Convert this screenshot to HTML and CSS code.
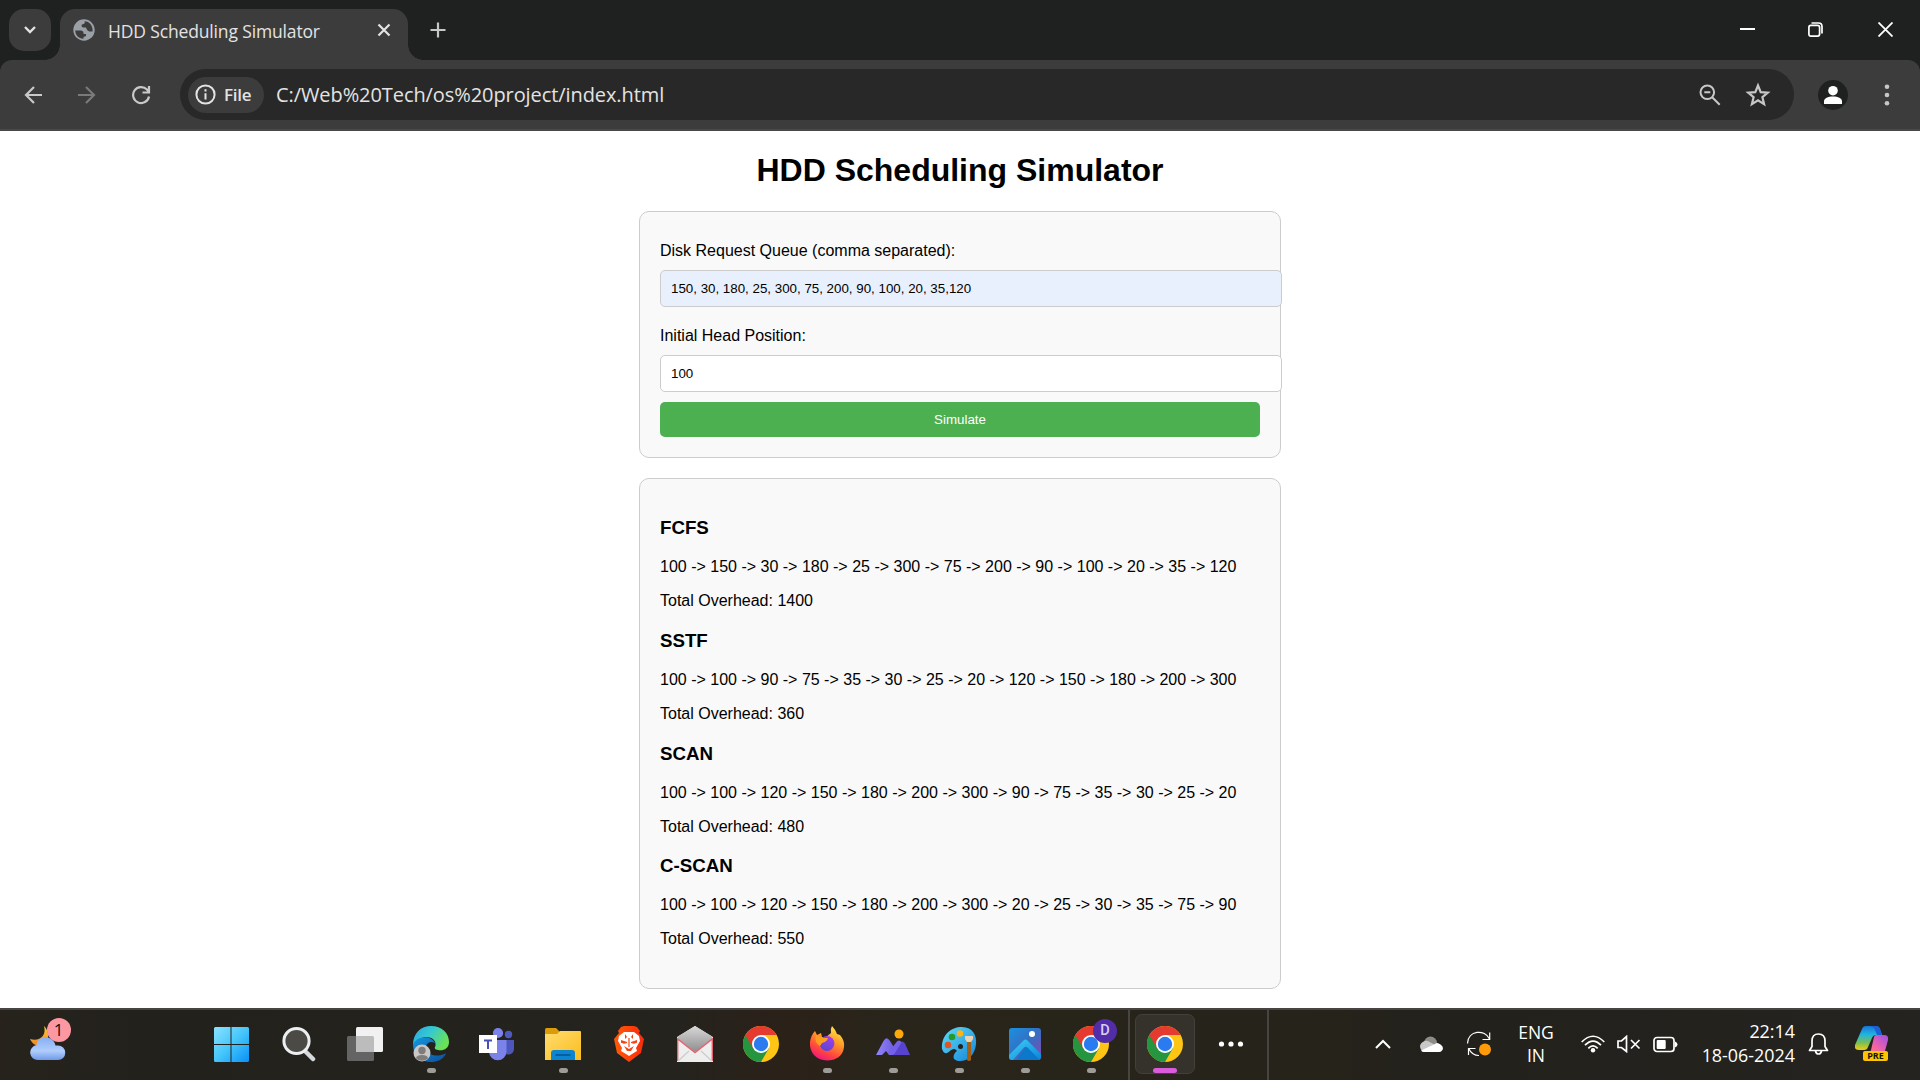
FILE: index.html
```html
<!DOCTYPE html>
<html lang="en">
<head>
<meta charset="utf-8">
<title>HDD Scheduling Simulator</title>
<link rel="stylesheet" href="styles.css">
</head>
<body>
<svg class="defs" width="0" height="0" aria-hidden="true">
  <defs>
    <linearGradient id="win" x1="0" y1="0" x2="1" y2="1"><stop offset="0" stop-color="#8be2ff"/><stop offset=".5" stop-color="#45c6fb"/><stop offset="1" stop-color="#0a90f5"/></linearGradient>
    <linearGradient id="moon" x1="0" y1="0" x2="0" y2="1"><stop offset="0" stop-color="#ffc93c"/><stop offset="1" stop-color="#ee8420"/></linearGradient>
    <linearGradient id="cloud" x1="0" y1="0" x2="0" y2="1"><stop offset="0" stop-color="#86aef5"/><stop offset=".6" stop-color="#b0cdfb"/><stop offset="1" stop-color="#7099ea"/></linearGradient>
    <linearGradient id="edgeTop" x1="0" y1="0" x2="1" y2=".5"><stop offset="0" stop-color="#2aa5e0"/><stop offset=".5" stop-color="#36c9d0"/><stop offset="1" stop-color="#6ae255"/></linearGradient>
    <linearGradient id="edgeBody" x1="0" y1="0" x2="1" y2="1"><stop offset="0" stop-color="#1497dd"/><stop offset="1" stop-color="#0c4f9f"/></linearGradient>
    <linearGradient id="folder" x1="0" y1="0" x2="1" y2="1"><stop offset="0" stop-color="#ffdc70"/><stop offset="1" stop-color="#fbbd1b"/></linearGradient>
    <linearGradient id="brave" x1="0" y1="0" x2="1" y2="0"><stop offset="0" stop-color="#ff5a0a"/><stop offset="1" stop-color="#fb2a0c"/></linearGradient>
    <linearGradient id="fox" x1=".8" y1="0" x2=".3" y2="1"><stop offset="0" stop-color="#fff04a"/><stop offset=".4" stop-color="#ff9a26"/><stop offset=".75" stop-color="#ff4340"/><stop offset="1" stop-color="#ec1582"/></linearGradient>
    <linearGradient id="foxGlobe" x1=".7" y1="0" x2=".3" y2="1"><stop offset="0" stop-color="#a63cf2"/><stop offset="1" stop-color="#5648cf"/></linearGradient>
    <linearGradient id="mountain" x1="0" y1="0" x2="1" y2="0"><stop offset="0" stop-color="#9286f6"/><stop offset="1" stop-color="#6a55e0"/></linearGradient>
    <linearGradient id="paint" x1="0" y1="0" x2="1" y2="1"><stop offset="0" stop-color="#5fdcfa"/><stop offset="1" stop-color="#1585d8"/></linearGradient>
    <linearGradient id="photo" x1="0" y1="0" x2="1" y2="1"><stop offset="0" stop-color="#1a91e0"/><stop offset=".5" stop-color="#346fc3"/><stop offset="1" stop-color="#8b47ae"/></linearGradient>
    <linearGradient id="hill" x1="0" y1="0" x2="1" y2="1"><stop offset="0" stop-color="#3fd0f5"/><stop offset="1" stop-color="#0c85dc"/></linearGradient>
    <linearGradient id="coA" x1="0" y1="0" x2="0" y2="1"><stop offset="0" stop-color="#1676d8"/><stop offset=".35" stop-color="#20b3e0"/><stop offset=".7" stop-color="#79bf55"/><stop offset="1" stop-color="#f2cc12"/></linearGradient>
    <linearGradient id="coB" x1="1" y1="0" x2="0" y2="1"><stop offset="0" stop-color="#9a51e8"/><stop offset=".55" stop-color="#f062a8"/><stop offset="1" stop-color="#ff8a53"/></linearGradient>
    <linearGradient id="mailTop" x1="0" y1="0" x2="0" y2="1"><stop offset="0" stop-color="#d8d8d8"/><stop offset="1" stop-color="#8e8e8e"/></linearGradient>
    <symbol id="chrome" viewBox="0 0 36 36">
      <circle cx="18" cy="18" r="18" fill="#ffc514"/>
      <path d="M18 18L2.4 9A18 18 0 0 0 18 36L25.8 22.5Z" fill="#26953f"/>
      <path d="M18 9H33.6A18 18 0 0 0 2.4 9L10.2 22.5 18 18Z" fill="#e43a30"/>
      <circle cx="18" cy="18" r="9" fill="#fff"/><circle cx="18" cy="18" r="7.2" fill="#2a7af0"/>
    </symbol>
  </defs>
</svg>

<header class="browser">
  <div class="tabstrip">
    <button class="tab-search" aria-label="Search tabs"><svg width="14" height="10" viewBox="0 0 14 10"><path d="M2 2l5 5 5-5" fill="none" stroke="#e3e3e3" stroke-width="2.4"/></svg></button>
    <div class="tab">
      <svg class="globe" width="22" height="22" viewBox="0 0 22 22"><circle cx="11" cy="11" r="10.7" fill="#9aa0a6"/><path d="M2.300 11.500H7.500q3 0 3 2.500v1h2.500v2l-2.500 1v1.700C5.500 19.700 2.300 16 2.300 11.500ZM11.500 2.300Q12.500 4.500 10.500 5q-2 .3-2 1.800 0 1.700 2 1.700h2.500q1 3.500 3.500 4H19.600C20 7 16.500 2.300 11.500 2.300Z" fill="#3c3c3c"/></svg>
      <span class="tab-title">HDD Scheduling Simulator</span>
      <svg class="tab-close" width="14" height="14" viewBox="0 0 14 14"><path d="M1.500 1.500l11 11M12.500 1.500l-11 11" stroke="#e3e3e3" stroke-width="2.200"/></svg>
    </div>
    <svg class="new-tab" width="18" height="18" viewBox="0 0 18 18"><path d="M9 1.500v15M1.500 9h15" stroke="#c7c7c7" stroke-width="2.200"/></svg>
    <div class="window-controls">
      <svg width="15" height="15" viewBox="0 0 15 15"><path d="M0 7h15" stroke="#fff" stroke-width="2"/></svg>
      <svg width="15" height="15" viewBox="0 0 15 15"><rect x=".9" y="3.400" width="10.700" height="10.700" rx="2" fill="none" stroke="#fff" stroke-width="1.700"/><path d="M3.500 1H10.500Q14 1 14 4.500V11.500" fill="none" stroke="#fff" stroke-width="1.700"/></svg>
      <svg width="15" height="15" viewBox="0 0 15 15"><path d="M.5.5l14 14M14.500.5l-14 14" stroke="#fff" stroke-width="1.800"/></svg>
    </div>
  </div>
  <div class="toolbar">
    <nav class="nav">
      <svg width="20" height="20" viewBox="0 0 20 20"><path d="M19 10H3M11 2L3 10l8 8" fill="none" stroke="#c9c9c9" stroke-width="2.200"/></svg>
      <svg width="20" height="20" viewBox="0 0 20 20"><path d="M1 10h16M9 2l8 8-8 8" fill="none" stroke="#7a7a7a" stroke-width="2.200"/></svg>
      <svg width="20" height="20" viewBox="0 0 20 20"><path d="M18 11.500A8 8 0 1 1 16 4.600L17.500 6.500M18 1v6.500h-6.500" fill="none" stroke="#c9c9c9" stroke-width="2.200"/></svg>
    </nav>
    <div class="omnibox">
      <div class="chip">
        <svg width="21" height="21" viewBox="0 0 21 21"><circle cx="10.500" cy="10.500" r="9.100" fill="none" stroke="#e3e3e3" stroke-width="2"/><path d="M10.500 9.300v6.200M10.500 5.300v2.200" stroke="#e3e3e3" stroke-width="2"/></svg>
        <span class="chip-label">File</span>
      </div>
      <span class="url">C:/Web%20Tech/os%20project/index.html</span>
      <svg class="zoom-icon" width="22" height="22" viewBox="0 0 22 22"><circle cx="8.300" cy="8.300" r="6.800" fill="none" stroke="#c7c7c7" stroke-width="2"/><path d="M13.200 13.200l7.500 7.500M5.300 8.300h6" stroke="#c7c7c7" stroke-width="2"/></svg>
      <svg class="star-icon" width="26" height="26" viewBox="0 0 26 26"><path d="M13 3.500l2.700 6.600 7.100.5-5.400 4.600 1.700 7L13 18.400l-6.100 3.800 1.700-7-5.400-4.600 7.100-.5Z" fill="none" stroke="#c7c7c7" stroke-width="2.200"/></svg>
    </div>
    <svg class="avatar" width="30" height="30" viewBox="0 0 30 30"><circle cx="15" cy="15" r="15" fill="#1f2020"/><circle cx="15" cy="10.700" r="4.800" fill="#fff"/><path d="M6 24v-2.500c0-3.500 4-5 9-5s9 1.500 9 5V24Z" fill="#fff"/></svg>
    <svg class="menu-dots" width="6" height="22" viewBox="0 0 6 22"><g fill="#c7c7c7"><circle cx="3" cy="2.800" r="2.300"/><circle cx="3" cy="11" r="2.300"/><circle cx="3" cy="19.200" r="2.300"/></g></svg>
  </div>
</header>

<main class="page">
  <h1>HDD Scheduling Simulator</h1>
  <form class="card form">
    <label for="queue">Disk Request Queue (comma separated):</label>
    <input class="autofilled" id="queue" type="text" value="150, 30, 180, 25, 300, 75, 200, 90, 100, 20, 35,120">
    <label for="head">Initial Head Position:</label>
    <input id="head" type="text" value="100">
    <button class="simulate" type="button">Simulate</button>
  </form>
  <section class="card results">
    <article class="result">
      <h3>FCFS</h3>
      <p>100 -&gt; 150 -&gt; 30 -&gt; 180 -&gt; 25 -&gt; 300 -&gt; 75 -&gt; 200 -&gt; 90 -&gt; 100 -&gt; 20 -&gt; 35 -&gt; 120</p>
      <p>Total Overhead: 1400</p>
    </article>
    <article class="result">
      <h3>SSTF</h3>
      <p>100 -&gt; 100 -&gt; 90 -&gt; 75 -&gt; 35 -&gt; 30 -&gt; 25 -&gt; 20 -&gt; 120 -&gt; 150 -&gt; 180 -&gt; 200 -&gt; 300</p>
      <p>Total Overhead: 360</p>
    </article>
    <article class="result">
      <h3>SCAN</h3>
      <p>100 -&gt; 100 -&gt; 120 -&gt; 150 -&gt; 180 -&gt; 200 -&gt; 300 -&gt; 90 -&gt; 75 -&gt; 35 -&gt; 30 -&gt; 25 -&gt; 20</p>
      <p>Total Overhead: 480</p>
    </article>
    <article class="result">
      <h3>C-SCAN</h3>
      <p>100 -&gt; 100 -&gt; 120 -&gt; 150 -&gt; 180 -&gt; 200 -&gt; 300 -&gt; 20 -&gt; 25 -&gt; 30 -&gt; 35 -&gt; 75 -&gt; 90</p>
      <p>Total Overhead: 550</p>
    </article>
  </section>
</main>

<footer class="taskbar">
  <div class="widgets">
    <svg width="36" height="36" viewBox="0 0 36 36"><path d="M14 1C21 8 19 19 9 21 5 21 2 18 0 14 9 17 17 11 14 1Z" fill="url(#moon)"/><path d="M8 35a7.500 7.500 0 0 1-1.500-14.900C7 10 23 9 25.500 20.500H28a7.200 7.200 0 0 1 0 14.500Z" fill="url(#cloud)"/></svg>
    <span class="count">1</span>
  </div>
  <div class="apps">
    <div class="app start"><svg width="36" height="36" viewBox="0 0 36 36"><path d="M2.500 1H17.500v17H1V2.500Q1 1 2.500 1ZM18.500 1H34.500Q36 1 36 2.500V18H18.500ZM1 19H17.500V36H2.500Q1 36 1 34.500ZM18.500 19H36V34.500Q36 36 34.500 36H18.500Z" fill="url(#win)"/></svg></div>
    <div class="app"><svg width="36" height="36" viewBox="0 0 36 36"><path d="M24 25l8 8" stroke="#d5d9dd" stroke-width="4.500" stroke-linecap="round"/><circle cx="15.500" cy="15" r="12.600" fill="#4c4a45" stroke="#eceff1" stroke-width="3"/></svg></div>
    <div class="app"><svg width="36" height="36" viewBox="0 0 36 36"><rect x="0" y="10" width="27" height="25" rx="1.500" fill="#646465"/><rect x="9" y="1" width="27" height="25" rx="1.500" fill="#f1f1f1"/><path d="M9 10H25.500Q27 10 27 11.500V26H10.500Q9 26 9 24.500Z" fill="#bcbcbc"/></svg></div>
    <div class="app open"><svg width="36" height="36" viewBox="0 0 36 36"><path d="M0 19C0 7 8 0 18 0c11 0 18 7 18 16 0 7-6 9-11 8-3-.500-4-1.500-2.500-4C24 11 10 6 0 19Z" fill="url(#edgeTop)"/><path d="M0 19C2 10 18 8 22 17 12 12 8 28 22 29.500c6 .5 10-2 11-2C30 34 24 36 18 36 7 36 0 28 0 19Z" fill="url(#edgeBody)"/><circle cx="9" cy="27" r="8.500" fill="#c9c8c6"/><circle cx="9" cy="24.500" r="3.700" fill="#807c79"/><path d="M3 32.500q0-3.500 6-3.500t6 3.500q-6 4.500-12 0Z" fill="#807c79"/></svg></div>
    <div class="app"><svg width="36" height="36" viewBox="0 0 36 36"><circle cx="29.500" cy="8.500" r="3.700" fill="#4e59c2"/><path d="M25 14H35V22.500c0 5-4 7-8.500 5.500Z" fill="#4c56bb"/><circle cx="19" cy="7" r="5.100" fill="#7b83eb"/><path d="M10 14H27.500V25.500a8.600 8.600 0 0 1-17.500 0Z" fill="#7b83eb"/><rect x="0" y="9" width="18" height="18" fill="#fff"/><path d="M5 13.500h8v2h-3V23H8v-7.500H5Z" fill="#4650b5"/></svg></div>
    <div class="app open"><svg width="36" height="36" viewBox="0 0 36 36"><path d="M0 3.500Q0 2 1.500 2H11l4 4V10H0Z" fill="#dc9c07"/><path d="M0 8h12l3-3H35q1 0 1 1V34H0Z" fill="url(#folder)"/><path d="M6 34V27Q6 24 9 24H27Q30 24 30 27V34Z" fill="#0d84cf"/><path d="M10.500 29h15" stroke="#075a98" stroke-width="1.800"/></svg></div>
    <div class="app"><svg width="36" height="36" viewBox="0 0 36 36"><path d="M10 1 13 0H23l3 1 3 4-1 2 5 6-3 14-12 9-12-9-3-14 5-6-1-2Z" fill="url(#brave)"/><path d="M8 10l5-4h10l5 4 1 5-4 7 1 3-5 3-3 2-3-2-5-3 1-3-4-7Z" fill="#fff"/><path d="M10 14l6 2v1l-3 .8-3-1ZM26 14l-6 2v1l3 .8 3-1ZM14 8l2 3-2 2M22 8l-2 3 2 2M13 20l5 3 5-3-3 5h-4Z" fill="#fb4212"/><path d="M18 12v9" stroke="#fb4212" stroke-width="1.200"/></svg></div>
    <div class="app"><svg width="36" height="36" viewBox="0 0 36 36"><path d="M0 11 18 0 36 11V36H0Z" fill="#eee"/><path d="M1 10.500 18 0l17 10.500V13L18 26 1 13Z" fill="url(#mailTop)"/><path d="M.7 35V13l17.300 13.500L35.300 13V35" fill="none" stroke="#e26370" stroke-width="1.400"/><path d="M1 35l11-10M35 35L24 25" stroke="#ccc" stroke-width="1.200"/></svg></div>
    <div class="app"><svg width="36" height="36"><use href="#chrome"/></svg></div>
    <div class="app open"><svg width="36" height="36" viewBox="0 0 36 36"><path d="M1 16Q2 9 6 5l2 4 4-2 1 4h4l5-4Q21 3 23 0q3 3 5 8l3 1q5 6 4 12C34 30 27 34.500 18 34.500 7 34.500 0 26 1 16Z" fill="url(#fox)"/><circle cx="18" cy="17.500" r="7.400" fill="url(#foxGlobe)"/><path d="M7 9l7 3h5q-1 4-6 5l-2 3q-6-3-4-11Z" fill="#ff9d20"/></svg></div>
    <div class="app open"><svg width="36" height="36" viewBox="0 0 36 36"><circle cx="24" cy="8" r="4.500" fill="#ffa90a"/><path d="M1 29 8.500 15q3-5.500 6.500 0l7 11-3 3h-5l-3-4-4 4Z" fill="url(#mountain)"/><path d="M17 29 24 17.500q3-4 6 0L35 29Z" fill="#5743cd"/><path d="M13 27l8.500-11q3-3 5 .5L20 27q-3 4-7 0Z" fill="#7361ec"/></svg></div>
    <div class="app open"><svg width="36" height="36" viewBox="0 0 36 36"><path d="M1 23C0 9 10 1 21 1c11 0 15 9 14 17-1 11-8 17-16 17-9 0-7-7-3-10-5-6-8 4-12 2Q2 26 1 23Z" fill="url(#paint)"/><circle cx="19" cy="7.500" r="3.300" fill="#ffb30c"/><circle cx="11" cy="11" r="3.300" fill="#259a2b"/><circle cx="7" cy="19" r="3.300" fill="#e2531f"/><circle cx="19.500" cy="20.500" r="2.500" fill="#24221c"/><path d="M26 15h4V34q-2 2-4 0Z" fill="#a45e12"/><path d="M24 10h8v3l-2 3h-4l-2-3Z" fill="#ead3b5"/></svg></div>
    <div class="app open"><svg width="36" height="36" viewBox="0 0 36 36"><rect x="2" y="2" width="32" height="32" rx="3" fill="url(#photo)"/><path d="M9 34 18 22q2-2 4 0L33 33q-1 1-2 1Z" fill="#0b78cc"/><path d="M2 29 16.500 14.500q2-2 4 0L34 28V31q0 2-1.500 2.600L20.500 21.500Q18.500 20 16.500 22L6 34H5q-3 0-3-3Z" fill="url(#hill)"/><circle cx="25" cy="8" r="3" fill="#fff"/></svg></div>
    <div class="app open"><svg width="36" height="36"><use href="#chrome"/></svg><span class="profile">D</span></div>
  </div>
  <div class="recent">
    <div class="active-app"><svg width="36" height="36"><use href="#chrome"/></svg></div>
    <svg class="more" width="26" height="8" viewBox="0 0 26 8"><g fill="#fff"><circle cx="3.500" cy="4" r="2.600"/><circle cx="13" cy="4" r="2.600"/><circle cx="22.500" cy="4" r="2.600"/></g></svg>
  </div>
  <div class="tray">
    <svg class="caret" width="16" height="11" viewBox="0 0 16 11"><path d="M1 9l7-7 7 7" fill="none" stroke="#fff" stroke-width="2"/></svg>
    <svg class="onedrive" width="24" height="17" viewBox="0 0 24 17"><circle cx="11.500" cy="7" r="6.500" fill="#8d8c8a"/><path d="M4 15A5 5 0 0 1 3 6.500Q7 3 11.500 6.500l8 4-7 4.500Z" fill="#c8c8c8"/><path d="M2 14.500 15 8.500q3-3 6.500 0 4 3 1.500 6-1 1.500-3 1.500H5q-2 0-3-1.500Z" fill="#fff"/></svg>
    <svg class="sync" width="26" height="26" viewBox="0 0 26 26"><path d="M1.500 12.500C2-1 19-2 23.500 8M23.700 1.500V8.500H16.500M2.500 24V17.500H9.500M3 18Q6 24.500 13 24.500" fill="none" stroke="#fff" stroke-width="1.200"/><circle cx="19" cy="18.500" r="6" fill="#ff9b0b"/></svg>
    <div class="lang"><span>ENG</span><span>IN</span></div>
    <svg class="wifi" width="24" height="18" viewBox="0 0 24 18"><g fill="none" stroke="#fff" stroke-width="1.700"><path d="M.7 7Q12-4.500 23.300 7"/><path d="M4 10.200Q12 2 20 10.200"/><path d="M7.300 13.300Q12 8.500 16.700 13.300"/></g><circle cx="12" cy="15.300" r="2.200" fill="#fff"/></svg>
    <svg class="volume" width="24" height="18" viewBox="0 0 24 18"><path d="M1 6h3.500L9.500 1.500V16.500L4.500 12.500H1ZM14 5l8.500 8.500M22.500 5l-8.500 8.500" fill="none" stroke="#fff" stroke-width="1.700"/></svg>
    <svg class="battery" width="25" height="17" viewBox="0 0 25 17"><rect x="1" y="1.500" width="20" height="14" rx="3" fill="none" stroke="#fff" stroke-width="1.700"/><rect x="3.700" y="4" width="9" height="9" rx="1" fill="#fff"/><path d="M22 5.500q2.500 1 2.500 3t-2.500 3Z" fill="#fff"/></svg>
    <div class="clock"><span>22:14</span><span>18-06-2024</span></div>
    <svg class="bell" width="21" height="22" viewBox="0 0 21 22"><path d="M1.500 17.500 4 13.500V8q0-7 6.500-7T17 8v5.500l2.500 4ZM7.500 18q.500 3 3 3t3-3" fill="none" stroke="#fff" stroke-width="1.700" stroke-linejoin="round"/></svg>
    <div class="copilot"><svg width="36" height="36" viewBox="0 0 36 36"><path d="M7 3q1-3 4-3h10q3 0 4 3l2 6h-6q-3 0-4 3l-4 9q-1 3-4 3H4q-5 0-4-5Z" fill="url(#coA)"/><path d="M11 0h10q3 0 4 3l2 6h-5l-2-5q-1-3-5-4Z" fill="#1c60d8"/><path d="M21 9h8q5 0 4 5l-3 11q-1 4-5 4H11q4-1 5-5l3-13q.500-2 2-2Z" fill="url(#coB)"/></svg><span class="pre">PRE</span></div>
  </div>
</footer>
</body>
</html>
```
FILE: styles.css
```css
* { box-sizing: border-box; }

body {
  margin: 0;
  width: 1920px;
  height: 1080px;
  overflow: hidden;
  display: flex;
  flex-direction: column;
  background: #fff;
  color: #000;
  font-family: "Liberation Sans", Arial, sans-serif;
}

svg { display: block; flex: none; }
.defs { position: absolute; }

/* Browser window */
.browser {
  height: 131px;
  flex: none;
  background: #1f2020;
  color: #e3e3e3;
  font-family: "Open Sans", "Noto Sans", sans-serif;
}
.tabstrip { height: 60px; display: flex; align-items: flex-start; padding: 9px 27px 0 9px; }
.tab-search {
  width: 42px;
  height: 42px;
  padding: 0;
  border: 0;
  border-radius: 15px;
  background: #3c3c3c;
  display: grid;
  place-items: center;
}
.tab {
  position: relative;
  width: 348px;
  height: 51px;
  margin-left: 9px;
  padding: 0 17px 9px 13px;
  border-radius: 15px 15px 0 0;
  background: #3c3c3c;
  display: flex;
  align-items: center;
}
.tab::before, .tab::after {
  content: "";
  position: absolute;
  bottom: 0;
  width: 15px;
  height: 15px;
}
.tab::before { left: -15px; background: radial-gradient(circle at 0 0, transparent 14.5px, #3c3c3c 15px); }
.tab::after { right: -15px; background: radial-gradient(circle at 100% 0, transparent 14.5px, #3c3c3c 15px); }
.tab-title { margin-left: 13px; flex: 1; font-size: 17.5px; line-height: 24px; padding-top: 1px; white-space: nowrap; letter-spacing: -0.15px; }
.new-tab { margin: 12px 0 0 21px; }
.window-controls { margin-left: auto; display: flex; gap: 54px; padding-top: 13px; }
.window-controls svg:nth-child(2) { margin: 0 1px 0 -1px; }

.toolbar {
  height: 71px;
  padding: 9px 30px 9px 23px;
  border-bottom: 2px solid #484848;
  border-radius: 12px 12px 0 0;
  background: #3c3c3c;
  display: flex;
  align-items: center;
}
.nav { display: flex; gap: 34px; width: 157px; }
.omnibox {
  width: 1614px;
  height: 51px;
  padding: 0 23px 0 8px;
  border-radius: 26px;
  background: #282828;
  display: flex;
  align-items: center;
}
.chip {
  width: 76px;
  height: 36px;
  padding-left: 7px;
  border-radius: 18px;
  background: #3c3c3c;
  display: flex;
  align-items: center;
  gap: 8px;
}
.chip-label { font-size: 17px; font-weight: 600; letter-spacing: -0.3px; }
.url { margin-left: 12px; flex: 1; font-size: 20px; line-height: 28px; letter-spacing: -0.08px; }
.zoom-icon { margin-right: 24px; }
.avatar { margin-left: 24px; }
.menu-dots { margin-left: auto; }

/* Simulator page */
.page { height: 877px; flex: none; overflow: hidden; }
.page h1 { margin: 21px 0 22px; font-size: 32px; line-height: 37px; text-align: center; }
.card {
  width: 642px;
  margin: 0 auto;
  padding: 20px;
  border: 1px solid #ccc;
  border-radius: 10px;
  background: #f9f9f9;
}
.form { height: 247px; }
.form label { display: block; margin: 10px 0; font-size: 16px; line-height: 18px; }
.form input {
  display: block;
  width: 622px;
  height: 37px;
  margin: 0 0 20px;
  padding: 10px;
  border: 1px solid #ccc;
  border-radius: 5px;
  background: #fff;
  color: #000;
  font: 13.333px "Liberation Sans", Arial, sans-serif;
}
.form input.autofilled { background: #e8f0fe; }
.form #head { margin-bottom: 10px; }
.simulate {
  display: block;
  width: 600px;
  height: 35px;
  padding: 0;
  border: 0;
  border-radius: 5px;
  background: #4caf50;
  color: #fff;
  font: 13.333px "Liberation Sans", Arial, sans-serif;
}
.results { height: 511px; margin-top: 20px; padding-top: 18px; }
.result { display: flow-root; height: 112.8px; }
.result h3 { margin: 20px 0 19px; font-size: 18.72px; line-height: 22px; }
.result p { margin: 0 0 16px; font-size: 16px; line-height: 18px; }

/* Desktop taskbar */
.taskbar {
  height: 72px;
  flex: none;
  border-top: 2px solid #464542;
  background: linear-gradient(90deg, #27231c 0, #22211c 8%, #24231d 35%, #2b2119 41%, #29251b 46%, #26231a 68%, #22211c 76%, #24231f 100%);
  color: #fff;
  font-family: "Open Sans", "Noto Sans", sans-serif;
  display: flex;
}
.widgets { position: relative; width: 198px; padding: 15px 0 0 30px; }
.count {
  position: absolute;
  left: 46.5px;
  top: 8px;
  width: 24px;
  height: 24px;
  border-radius: 50%;
  background: #fd98a3;
  color: #111;
  font-size: 17px;
  line-height: 24px;
  text-align: center;
}
.apps { width: 930px; display: flex; border-right: 2px solid #464542; box-sizing: content-box; }
.app { position: relative; width: 66px; flex: none; padding: 16px 0 0 15px; }
.app.start { width: 68px; }
.app.open::after {
  content: "";
  position: absolute;
  left: 29px;
  top: 58px;
  width: 9px;
  height: 5px;
  border-radius: 3px;
  background: #9d9c99;
}
.profile {
  position: absolute;
  left: 35px;
  top: 9px;
  width: 24px;
  height: 24px;
  border-radius: 50%;
  background: #512da8;
  color: #d9cdf5;
  font: 500 14.5px/24px Roboto, sans-serif;
  text-align: center;
}
.recent { width: 139px; display: flex; border-right: 2px solid #464542; padding: 4px 0 0 5px; }
.active-app {
  position: relative;
  width: 60px;
  height: 60px;
  padding: 11px;
  border: 1px solid #42403a;
  border-radius: 7px;
  background: #34322b;
}
.active-app::after {
  content: "";
  position: absolute;
  left: 17px;
  top: 53px;
  width: 24px;
  height: 5px;
  border-radius: 3px;
  background: #da5bdc;
}
.more { margin: 26px 0 0 23px; }
.tray { flex: 1; height: 68px; display: flex; align-items: center; padding-left: 106px; }
.onedrive { margin-left: 28px; }
.sync { margin-left: 23px; }
.lang { width: 40px; margin-left: 24px; text-align: center; }
.lang span, .clock span { display: block; font-size: 17.5px; line-height: 23.5px; white-space: nowrap; }
.clock span { font-size: 17.9px; line-height: 24px; margin-top: -0.5px; }
.wifi { margin-left: 25px; }
.volume { margin-left: 12px; }
.battery { margin-left: 12px; }
.clock { width: 100px; margin-left: 17px; padding-bottom: 2px; text-align: right; }
.bell { margin-left: 13px; }
.copilot { position: relative; margin-left: 26px; }
.pre {
  position: absolute;
  left: 8px;
  top: 25px;
  width: 25px;
  height: 10px;
  border-radius: 2px;
  background: #ffc400;
  color: #111;
  font-size: 9px;
  font-weight: 700;
  line-height: 10px;
  text-align: center;
}
```
